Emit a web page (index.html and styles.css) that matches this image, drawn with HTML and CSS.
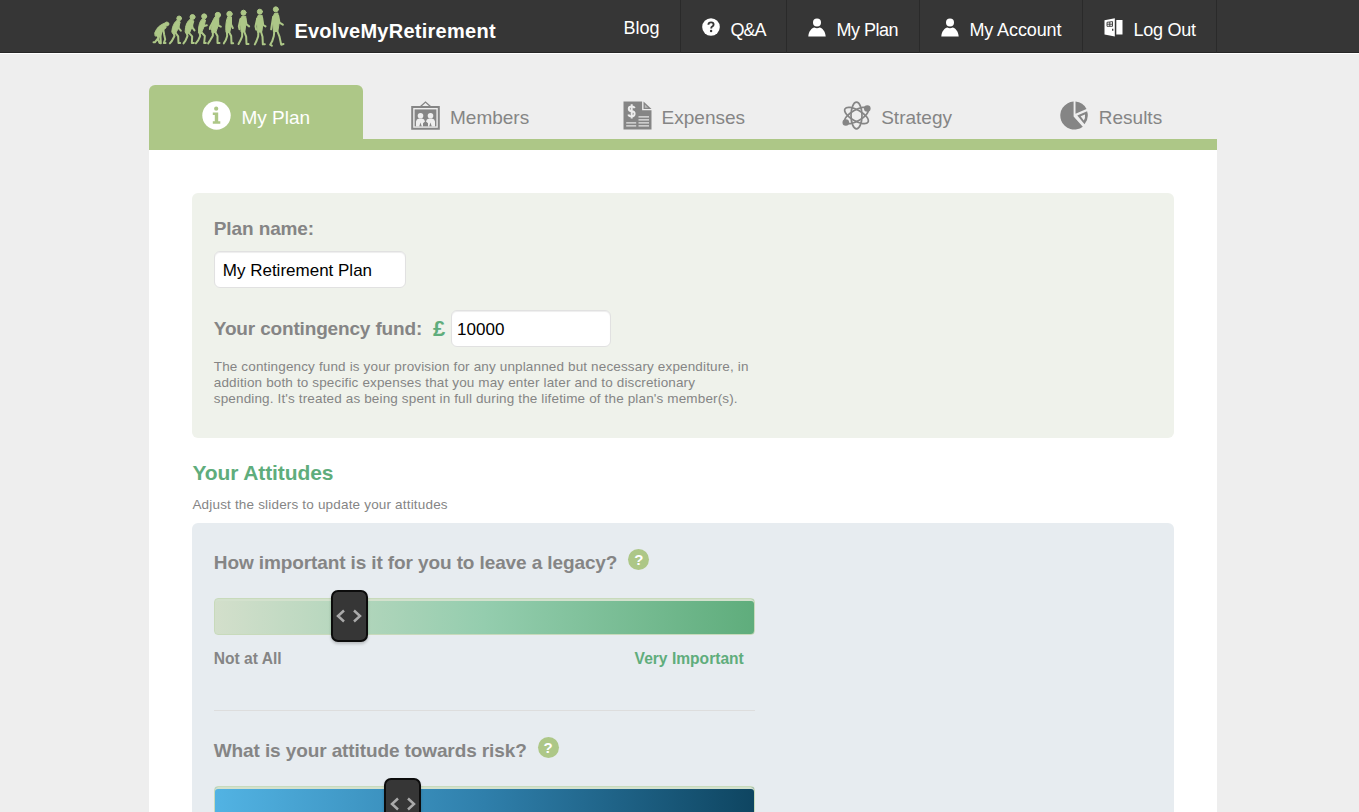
FILE: index.html
```
<!DOCTYPE html>
<html lang="en">
<head>
<meta charset="utf-8">
<title>EvolveMyRetirement</title>
<link rel="stylesheet" href="styles.css">
</head>
<body>
<header class="topbar">
  <div class="topbar-inner">
    <svg class="logo" viewBox="15 15 410 129" width="137" height="43">
      <g class="figures">
        <path class="body" d="M29 98q8-22 31-29l3 14-13 11-8 11-11 3z"/><circle cx="65" cy="72" r="6"/><path d="M33 101l7 12-11 14h-4M41 103l-2 16 4 10M54 86l3 18 3 14-4 11h5M49 94l-3 14 1 22"/>
        <path class="body" d="M80 94q2-25 18-35l7 7-4 16-9 17-9 1z"/><circle cx="102" cy="55" r="7"/><path d="M84 96l4 12-8 15-6 7M90 97l9 12 1 20h5M97 68l4 17 6 7"/>
        <path class="body" d="M120 94q0-27 17-38l9 7-5 17-8 19-10 1z"/><circle cx="142" cy="51" r="7.500"/><path d="M124 96l3 12-6 14-6 8M130 97l11 12-1 20h6M140 66l2 17 6 8"/>
        <path class="body" d="M160 92q0-26 12-36l9 4-4 19-8 19-8 1z"/><circle cx="177" cy="49" r="7.500"/><path d="M163 95l2 13-6 13-7 9M168 96l11 12-2 21h5M174 66l0 13 11-3"/>
        <path class="body" d="M199 90q0-27 11-40l11 2-1 22-8 23-10 2z"/><circle cx="218" cy="45" r="8"/><path d="M203 93l0 14-8 14-6 9M209 94l8 14 0 21h6M218 60l2 17 7 3M205 63l-10 18-1 6"/>
        <path class="body" d="M242 89q-1-25 6-39l11 1 0 21-5 24-10 1z"/><circle cx="253" cy="42" r="8"/><path d="M245 92l1 16-4 12-6 10M250 93l8 15 1 22h5M256 57l2 17 5 10"/>
        <path class="body" d="M287 88l-2-30 6-10 11 1 0 24-3 22-10 1z"/><circle cx="295" cy="38" r="7.500"/><path d="M291 90l0 19-5 12-6 11M296 92l7 18 1 22h6M301 56l3 17 8 6M286 57l-5 22 2 9"/>
        <path class="body" d="M336 86l-1-31 5-10 11 1 2 27-3 22-12 2z"/><circle cx="344" cy="35" r="7.500"/><path d="M340 89l-1 20-5 14-5 10M346 90l6 20 1 23h6M351 54l3 21 7 4M336 56l-5 23 2 10"/>
        <path class="body" d="M384 83l-1-30 5-13 10-1 4 30-4 25-12 1z"/><circle cx="392" cy="28" r="7.500"/><path d="M388 86l-2 22-5 16-6 10 5 3M394 87l9 23 5 24 7-2M399 47l4 21 10 6M384 50l-4 25-2 13"/>
      </g>
    </svg>
    <div class="brand">EvolveMyRetirement</div>
    <nav class="topnav">
      <a class="nav-blog">Blog</a>
      <a class="nav-qa"><svg width="18" height="18" viewBox="0 0 18 18"><circle cx="9" cy="9" r="8.800" fill="#fff"/><path d="M6.400 6.700Q6.500 4.400 9.100 4.400q2.500 0 2.500 2.100 0 1.300-1.400 2-1 .5-1 2" fill="none" stroke="#363636" stroke-width="1.900"/><circle cx="9.100" cy="13" r="1.200" fill="#363636"/></svg><span>Q&amp;A</span></a>
      <a class="nav-plan"><svg width="18" height="19" viewBox="0 0 18 19"><circle cx="9" cy="4.500" r="4" fill="#fff"/><path d="M.3 18.500C.6 13 4 10 6.300 9.500Q9 11 11.700 9.500C14 10 17.400 13 17.700 18.500z" fill="#fff"/></svg><span>My Plan</span></a>
      <a class="nav-account"><svg width="18" height="19" viewBox="0 0 18 19"><circle cx="9" cy="4.500" r="4" fill="#fff"/><path d="M.3 18.500C.6 13 4 10 6.300 9.500Q9 11 11.700 9.500C14 10 17.400 13 17.700 18.500z" fill="#fff"/></svg><span>My Account</span></a>
      <a class="nav-logout"><svg width="19" height="19" viewBox="0 0 19 19"><path d="M.5 2.200L10.800.3v18.200L.5 16.600z" fill="#fff"/><path d="M12.300 2H18.500v14.500h-6.200z" fill="#fff"/><path d="M3 4.300l5.500-.7v4.700H3zM5.800 4v4.400M3 6.200h5.500" fill="none" stroke="#363636" stroke-width=".9"/><path d="M8.700 10.800v2" stroke="#363636" stroke-width="1.300"/></svg><span>Log Out</span></a>
    </nav>
  </div>
</header>
<main class="page">
  <div class="tabs">
    <a class="tab active t1"><svg width="29" height="29" viewBox="0 0 29 29"><circle cx="14.500" cy="14.500" r="14.200" fill="#fff"/><circle cx="14.200" cy="7.700" r="2.100" fill="#adc787"/><path d="M10.800 11.500h5.400v8.800h2.100v2.500h-7.500v-2.500h2v-6.300h-2z" fill="#adc787"/></svg><span>My Plan</span></a>
    <a class="tab t2"><svg width="29" height="29" viewBox="0 0 29 29"><path d="M9.500 5.500L14.500 1l5 4.500" fill="none" stroke="#858585" stroke-width="1.300"/><path d="M1.200 6h26.600v21.800H1.200z" fill="#eee" stroke="#858585" stroke-width="2"/><path d="M3.600 8.400h21.800v17H3.600z" fill="#858585"/><g fill="#eee"><circle cx="9.500" cy="14.700" r="2.800"/><circle cx="19.500" cy="14.700" r="2.800"/><path d="M5 25.400v-5q.5-2.400 2.500-2.700h4q2 .3 2.500 2.700l-2 1.800v3.200h-1.200l-1.300-4-1.300 4zM24 25.400v-5q-.5-2.400-2.500-2.700h-4q-2 .3-2.500 2.700l2 1.800v3.200h1.200l1.300-4 1.300 4z"/></g></svg><span>Members</span></a>
    <a class="tab t3"><svg width="29" height="29" viewBox="0 0 29 29"><path d="M.5.500h18.600v8.800h9.400v19.200H.5z" fill="#858585"/><path d="M20.500.500l8 7.500h-8z" fill="#858585"/><path d="M21.800 3.500v3.200h3.400z" fill="#bbb"/><path d="M11.700 7.200Q11 5.500 8.800 5.500 5.800 5.500 5.800 7.800T8.800 10.300t2.800 2.700-2.900 2.500T5.400 13.500M8.700 3.200v14.300" fill="none" stroke="#eee" stroke-width="2"/><path d="M15.500 15.800h10.500M15.500 18.800h10.500M3.200 21.800h10M15.500 21.800h10.500M3.200 24.800h10M15.500 24.800h10.500" stroke="#e5e5e5" stroke-width="1.300"/></svg><span>Expenses</span></a>
    <a class="tab t4"><svg width="29" height="29" viewBox="0 0 29 29" fill="none" stroke="#858585" stroke-width="1.700"><ellipse cx="14.500" cy="14.500" rx="5.500" ry="13.300"/><ellipse cx="14.500" cy="14.500" rx="5.500" ry="13.300" transform="rotate(60 14.500 14.500)"/><ellipse cx="14.500" cy="14.500" rx="5.500" ry="13.300" transform="rotate(-60 14.500 14.500)"/><g fill="#858585" stroke="none"><circle cx="25.300" cy="7.500" r="3.300"/><circle cx="3.800" cy="21.500" r="3.300"/></g></svg><span>Strategy</span></a>
    <a class="tab t5"><svg width="29" height="29" viewBox="0 0 29 29"><path d="M13.600.6v14.900l9.200 10.200A14 14 0 1 1 13.600.6z" fill="#858585"/><path d="M15.500.5q7.500.5 11 7.500L15.500 12.800z" fill="#858585"/><path d="M17.300 14.600l9.800-4.300q2.200 7.400-2.600 13z" fill="#858585"/><path d="M20.600 15.300l4.400-1.900q.5 3.500-1.200 6.100z" fill="#eee"/></svg><span>Results</span></a>
  </div>
  <div class="content">
    <section class="panel plan">
      <label class="label plan-label">Plan name:</label>
      <div><input class="field name" value="My Retirement Plan"></div>
      <div class="fund"><label class="label">Your contingency fund:</label><span class="pound">£</span><input class="field amount" value="10000"></div>
      <p class="note">The contingency fund is your provision for any unplanned but necessary expenditure, in<br>addition both to specific expenses that you may enter later and to discretionary<br>spending. It's treated as being spent in full during the lifetime of the plan's member(s).</p>
    </section>
    <h2>Your Attitudes</h2>
    <p class="hint">Adjust the sliders to update your attitudes</p>
    <section class="panel attitudes">
      <div class="question">
        <div class="qtitle"><span class="label">How important is it for you to leave a legacy?</span><i class="help">?</i></div>
        <div class="slider green"><div class="handle legacy"><svg width="26" height="14" viewBox="0 0 26 14"><path d="M8 1.500L2 7l6 5.500M18 1.500L24 7l-6 5.500"/></svg></div></div>
        <div class="ends"><span>Not at All</span><span class="high">Very Important</span></div>
      </div>
      <div class="question">
        <div class="qtitle"><span class="label">What is your attitude towards risk?</span><i class="help">?</i></div>
        <div class="slider blue"><div class="handle risk"><svg width="26" height="14" viewBox="0 0 26 14"><path d="M8 1.500L2 7l6 5.500M18 1.500L24 7l-6 5.500"/></svg></div></div>
      </div>
    </section>
  </div>
</main>
</body>
</html>
```
FILE: styles.css
```
* { box-sizing: border-box; }
body { margin: 0; height: 812px; overflow: hidden; background: #eee; font-family: "Liberation Sans", Arial, sans-serif; color: #858585; }
.topbar { height: 54px; background: #363636; border-bottom: 1px solid #fff; box-shadow: inset 0 -1px #262626; }
.topbar-inner { display: flex; width: 1068px; height: 53px; margin-left: 149.4px; }
.logo { margin: 5px 0 0 1px; flex: none; }
.figures { stroke: #adc787; stroke-width: 6; stroke-linejoin: round; stroke-linecap: round; fill: none; }
.figures circle, .figures .body { fill: #adc787; stroke-width: 3; }
.brand { font: bold 20px/23px "Liberation Sans", Arial, sans-serif; letter-spacing: .26px; color: #fff; padding: 20px 0 0 7px; }
.topnav { display: flex; margin-left: auto; height: 53px; color: #fff; font-size: 18px; line-height: 21px; }
.topnav a { display: flex; border-right: 1px solid #2a2a2a; padding: 20px 0 0 21px; white-space: nowrap; }
.topnav svg { flex: none; margin: -2px 10px 0 0; }
.topnav .nav-blog { width: 79px; padding-top: 18px; }
.nav-qa { width: 106px; letter-spacing: -1px; }
.nav-plan { width: 133px; letter-spacing: -.5px; }
.nav-account { width: 163px; letter-spacing: -.1px; }
.nav-logout { width: 134px; letter-spacing: -.25px; }
.page { width: 1068px; margin: 31px 0 0 149.4px; }
.tabs { display: grid; grid-template-columns: repeat(5, 1fr); height: 65px; border-bottom: 11px solid #adc787; }
.tab { display: flex; font-size: 19px; line-height: 23px; padding-top: 16px; }
.tab svg { flex: none; margin-right: 10px; }
.tab span { padding-top: 5px; }
.tab.active { background: #adc787; color: #fff; border-radius: 6px 6px 0 0; }
.t1 { padding-left: 53px; } .t2 { padding-left: 48px; } .t3 { padding-left: 46px; } .t4 { padding-left: 52px; } .t5 { padding-left: 56px; }
.content { background: #fff; height: 662px; padding: 43px 43px 0; }
.panel { border-radius: 6px; padding: 0 21.400px; }
.plan { height: 245px; background: #eff2eb; padding-top: 25px; }
.label { font-size: 19px; line-height: 22px; font-weight: bold; letter-spacing: -.11px; }
.plan-label { display: block; }
.field { display: block; height: 37px; margin: 0; border: 1px solid #e1e1e1; border-radius: 6px; background: #fff; color: #000; font: 17px "Liberation Sans", Arial, sans-serif; box-shadow: inset 0 1px 1px #eee; }
.name { width: 192px; margin-top: 11px; padding: 2px 8px 0; }
.fund { display: flex; align-items: center; margin-top: 22px; }
.fund .label { letter-spacing: -.16px; }
.pound { width: 29px; padding-left: 11px; color: #5fad7c; font-weight: bold; font-size: 22px; }
.amount { width: 160px; padding: 2px 5px 0; }
.note { margin: 12px 0 0; font-size: 13.500px; line-height: 16px; letter-spacing: .145px; white-space: nowrap; }
h2 { margin: 23px 0 0; font-size: 21px; line-height: 24px; letter-spacing: -.1px; color: #5fad7c; }
.hint { margin: 12px 0 10px; font-size: 13.500px; line-height: 16px; letter-spacing: .18px; }
.attitudes { height: 289px; background: #e7ecf0; padding-top: 26px; border-radius: 6px 6px 0 0; overflow: hidden; }
.question { width: 541px; height: 162px; border-bottom: 1px solid #ddd; }
.question + .question { border: 0; padding-top: 26px; }
.question .label { padding-top: 3px; }
.qtitle { display: flex; height: 49px; }
.help { width: 21px; height: 21px; margin-left: 11px; border-radius: 50%; background: #adc787; color: #fff; font: bold 15px/21px "Liberation Sans", Arial, sans-serif; text-align: center; }
.slider { height: 37px; border: 1px solid #c8dabb; border-radius: 4px; box-shadow: inset 0 2px #d3e1cd; position: relative; }
.green { background: linear-gradient(90deg, #d3dfcb, #94cdae 50%, #5fad7c); }
.blue { background: linear-gradient(90deg, #52b3e3, #2f7fab 50%, #0e4561); }
.handle { position: absolute; top: -9px; width: 37px; height: 52px; border: 2px solid #0c0c0c; border-radius: 7px; background: #363636; display: grid; place-items: center; box-shadow: 0 2px 3px #0003; }
.handle path { fill: none; stroke: #aaa; stroke-width: 2.500; }
.legacy { left: 116px; }
.risk { left: 169.500px; }
.ends { display: flex; justify-content: space-between; padding: 15px 11px 0 0; font-size: 15.600px; line-height: 18px; font-weight: bold; }
.high { color: #5fad7c; }
```
